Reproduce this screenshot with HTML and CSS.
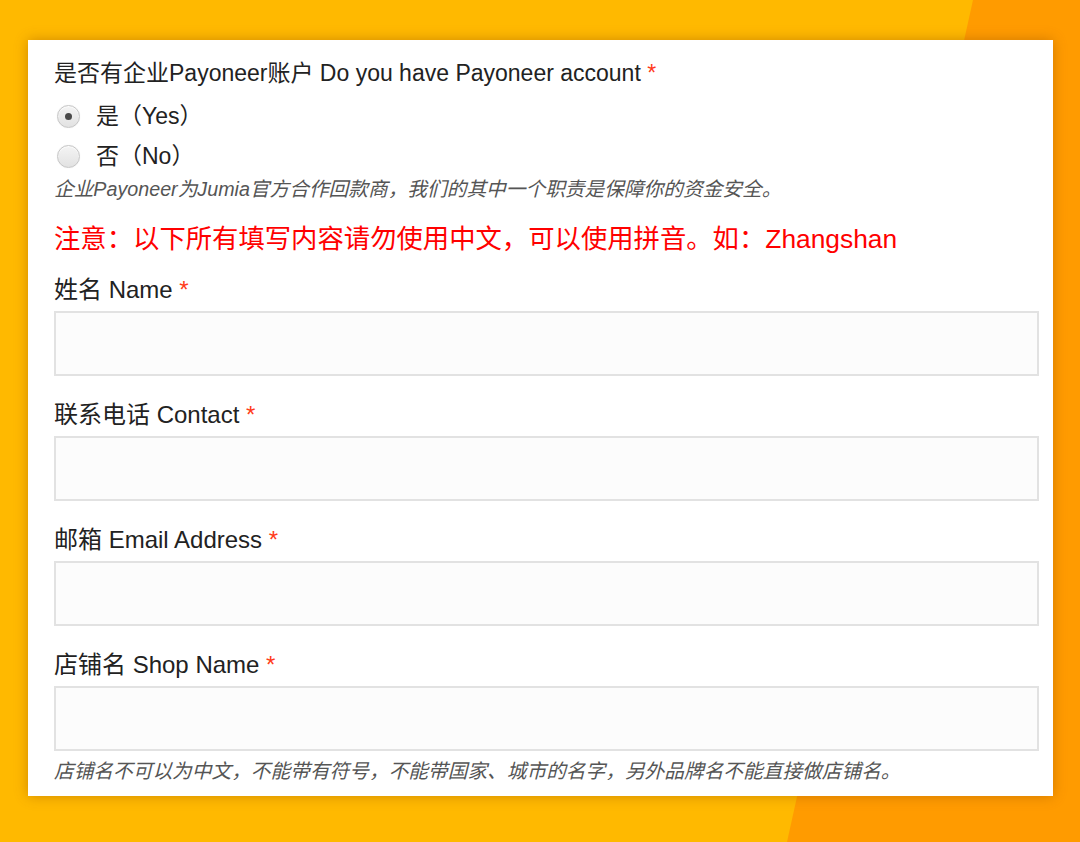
FILE: index.html
```html
<!DOCTYPE html>
<html lang="zh">
<head>
<meta charset="utf-8">
<title>Payoneer form</title>
<link rel="stylesheet" href="styles.css">
</head>
<body>
<div class="bg">
  <div class="card">
    <div class="field-q">
      <div class="label q">是否有企业Payoneer账户 Do you have Payoneer account <span class="req">*</span></div>
      <div class="options">
        <label class="opt"><span class="radio checked"></span><span class="opt-text">是（Yes）</span></label>
        <label class="opt"><span class="radio"></span><span class="opt-text">否（No）</span></label>
      </div>
      <div class="help">企业Payoneer为Jumia官方合作回款商，我们的其中一个职责是保障你的资金安全。</div>
    </div>
    <div class="notice">注意：以下所有填写内容请勿使用中文，可以使用拼音。如：Zhangshan</div>
    <div class="field">
      <div class="label">姓名 Name <span class="req">*</span></div>
      <div class="input"></div>
    </div>
    <div class="field">
      <div class="label">联系电话 Contact <span class="req">*</span></div>
      <div class="input"></div>
    </div>
    <div class="field">
      <div class="label">邮箱 Email Address <span class="req">*</span></div>
      <div class="input"></div>
    </div>
    <div class="field last">
      <div class="label">店铺名 Shop Name <span class="req">*</span></div>
      <div class="input"></div>
      <div class="help">店铺名不可以为中文，不能带有符号，不能带国家、城市的名字，另外品牌名不能直接做店铺名。</div>
    </div>
  </div>
</div>
</body>
</html>
```
FILE: styles.css
```css
html, body {
  margin: 0;
  padding: 0;
}
body {
  width: 1080px;
  height: 842px;
  overflow: hidden;
  font-family: "Liberation Sans", "Noto Sans CJK SC", sans-serif;
  color: #222;
}
.bg {
  position: relative;
  width: 1080px;
  height: 842px;
  padding-top: 40px;
  box-sizing: border-box;
  background: #ffb900;
  overflow: hidden;
}
.bg::before {
  content: "";
  position: absolute;
  top: 0;
  left: 0;
  width: 1080px;
  height: 842px;
  background: #ff9b00;
  clip-path: polygon(973px 0, 1080px 0, 1080px 842px, 787px 842px);
}
.card {
  position: relative;
  margin-left: 28px;
  width: 1025px;
  height: 756px;
  box-sizing: border-box;
  background: #fff;
  padding: 18px 14px 0 26px;
  box-shadow: 0 0 12px rgba(150, 80, 0, 0.45);
}
.label {
  font-size: 24px;
  line-height: 30px;
  color: #222;
}
.label.q {
  font-size: 23px;
}
.req {
  color: #ff3b1a;
}
.options {
  margin-top: 8px;
}
.opt {
  display: flex;
  align-items: center;
  height: 40px;
}
.radio {
  width: 23px;
  height: 23px;
  margin-left: 3px;
  margin-right: 16px;
  border-radius: 50%;
  border: 1px solid #c6c6c6;
  background: linear-gradient(#f4f4f4, #e2e2e2);
  box-shadow: inset 0 1px 1px rgba(255,255,255,0.8), 0 0 1px rgba(0,0,0,0.1);
  position: relative;
  box-sizing: border-box;
}
.radio.checked::after {
  content: "";
  position: absolute;
  left: 7px;
  top: 7px;
  width: 7px;
  height: 7px;
  border-radius: 50%;
  background: #4a4a4a;
}
.opt-text {
  font-size: 23px;
  line-height: 30px;
}
.help {
  font-size: 19.7px;
  font-style: italic;
  color: #555;
  line-height: 26px;
}
.notice {
  margin-top: 20px;
  font-size: 26.35px;
  line-height: 34px;
  color: #ff0000;
}
.field {
  margin-top: 19px;
}
.field + .field {
  margin-top: 24px;
}
.input {
  margin-top: 6px;
  height: 65px;
  box-sizing: border-box;
  border: 2px solid #e2e2e2;
  background: #fcfcfc;
}
.field.last .help {
  margin-top: 7px;
}
```
